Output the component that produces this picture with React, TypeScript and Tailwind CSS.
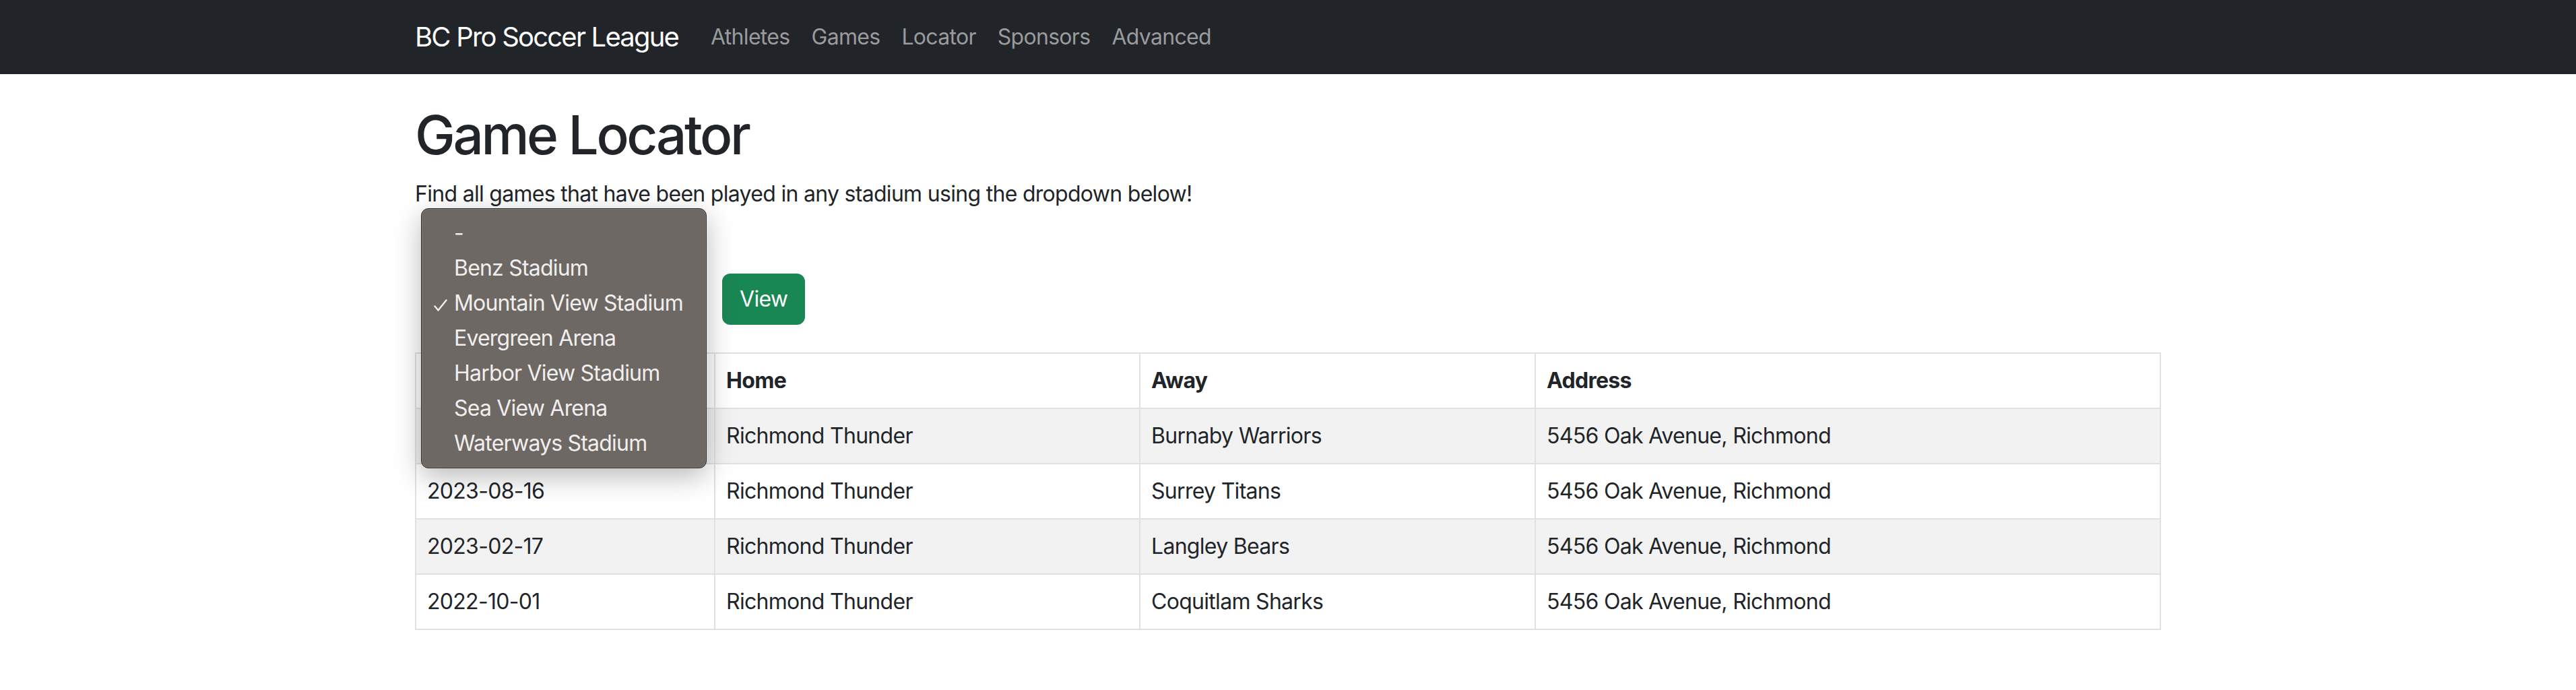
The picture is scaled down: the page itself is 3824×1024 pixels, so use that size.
import React from "react";

const links = ["Athletes", "Games", "Locator", "Sponsors", "Advanced"];

const stadiums = [
  "-",
  "Benz Stadium",
  "Mountain View Stadium",
  "Evergreen Arena",
  "Harbor View Stadium",
  "Sea View Arena",
  "Waterways Stadium",
];

const rows = [
  ["2024-04-13", "Richmond Thunder", "Burnaby Warriors", "5456 Oak Avenue, Richmond"],
  ["2023-08-16", "Richmond Thunder", "Surrey Titans", "5456 Oak Avenue, Richmond"],
  ["2023-02-17", "Richmond Thunder", "Langley Bears", "5456 Oak Avenue, Richmond"],
  ["2022-10-01", "Richmond Thunder", "Coquitlam Sharks", "5456 Oak Avenue, Richmond"],
];

function Popup() {
  return (
    <div className="absolute left-[-9px] top-[-99px] z-10 w-[424px] rounded-[11px] border border-[#2e2b29] bg-[#6e6864] py-[10px] shadow-[0_12px_40px_rgba(0,0,0,0.28)] ring-1 ring-inset ring-white/10">
      {stadiums.map((s) => (
        <div
          key={s}
          className="relative pl-[48px] text-[32px] leading-[52px] tracking-[-0.8px] text-[#f1efee]"
        >
          {s === "Mountain View Stadium" && (
            <svg
              className="absolute left-[18px] top-[20px]"
              width="20"
              height="18"
              viewBox="0 0 20 18"
              fill="none"
            >
              <path
                d="M1.5 10.5 L6.5 16.5 L18.5 1.5"
                stroke="#f1efee"
                strokeWidth="2.4"
                strokeLinecap="round"
                strokeLinejoin="round"
              />
            </svg>
          )}
          {s}
        </div>
      ))}
    </div>
  );
}

export default function App() {
  return (
    <div className="min-h-screen bg-white font-['Inter',sans-serif] text-[#212529] tracking-[-0.7px]">
      <nav className="h-[110px] bg-[#212529]">
        <div className="mx-auto flex h-full w-[2640px] items-center px-[24px]">
          <a className="mr-[32px] text-[40px] leading-[60px] tracking-[-1.8px] text-white">BC Pro Soccer League</a>
          <ul className="flex">
            {links.map((l) => (
              <li key={l}>
                <a className="block px-[16px] text-[32px] leading-[48px] text-[#9a9b9d]">{l}</a>
              </li>
            ))}
          </ul>
        </div>
      </nav>
      <main className="mx-auto w-[2640px] px-[24px] pt-[42px]">
        <h1 className="mb-[16px] text-[80px] font-medium leading-[96px] tracking-[-3.4px]">Game Locator</h1>
        <p className="mb-[94px] text-[32px] leading-[48px]">
          Find all games that have been played in any stadium using the dropdown below!
        </p>
        <div className="mb-[41px] flex items-center">
          <div className="relative ml-[16px] h-[76px] w-[408px] rounded-[12px] border-2 border-[#dee2e6] bg-white">
            <Popup />
          </div>
          <button className="ml-[32px] h-[76px] rounded-[12px] border-2 border-[#198754] bg-[#198754] px-[24px] text-[32px] leading-[48px] text-white">
            View
          </button>
        </div>
        <table className="w-full table-fixed border-collapse text-left text-[32px] leading-[48px]">
          <colgroup>
            <col className="w-[444px]" />
            <col className="w-[631px]" />
            <col className="w-[587px]" />
            <col />
          </colgroup>
          <thead>
            <tr>
              {["Date", "Home", "Away", "Address"].map((h) => (
                <th key={h} className="border-2 border-[#dee2e6] p-[16px] font-bold">
                  {h}
                </th>
              ))}
            </tr>
          </thead>
          <tbody>
            {rows.map((r, i) => (
              <tr key={i} className={i % 2 === 0 ? "bg-[#f2f2f2]" : "bg-white"}>
                {r.map((c, j) => (
                  <td key={j} className="border-2 border-[#dee2e6] p-[16px]">
                    {c}
                  </td>
                ))}
              </tr>
            ))}
          </tbody>
        </table>
      </main>
    </div>
  );
}
